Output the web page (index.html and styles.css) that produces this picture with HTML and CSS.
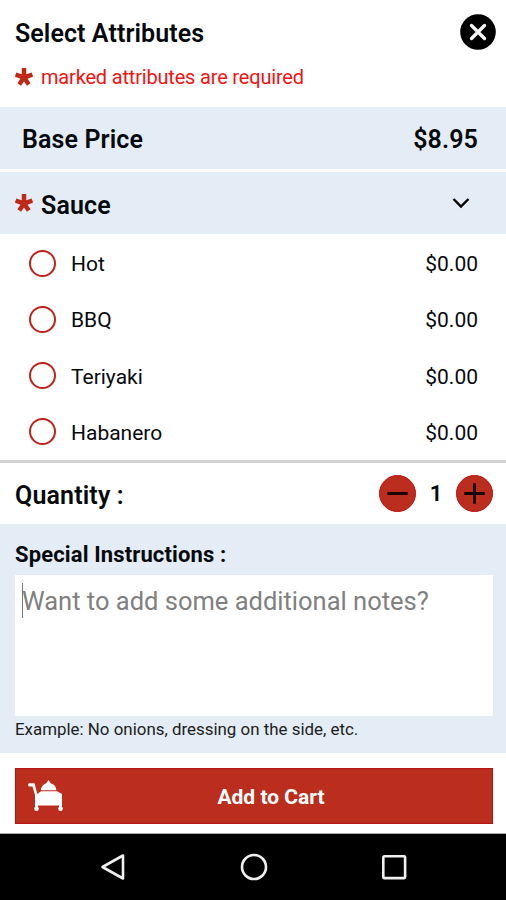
FILE: index.html
```html
<!DOCTYPE html>
<html lang="en">
<head>
<meta charset="utf-8">
<title>Select Attributes</title>
<link rel="stylesheet" href="styles.css">
</head>
<body>
<svg class="defs" aria-hidden="true">
  <symbol id="star" viewBox="0 0 18 18"><path d="M9 9.500V0M9 9.500L.6 6.600M9 9.500L17.4 6.600M9 9.500L4.200 16.600M9 9.500L13.800 16.600" fill="none" stroke="currentColor" stroke-width="4.5"/></symbol>
</svg>
<main class="screen">
  <header class="header">
    <div class="title-row">
      <h1 class="title">Select Attributes</h1>
      <button class="close" aria-label="Close"><svg viewBox="0 0 36 36"><circle cx="18" cy="18" r="17.8" fill="#000"/><path d="M11.5 11.5l13 13m0-13l-13 13" stroke="#f4f4f4" stroke-width="3.4" stroke-linecap="round"/></svg></button>
    </div>
    <p class="required"><svg class="star"><use href="#star"/></svg><span class="required-text">marked attributes are required</span></p>
  </header>
  <section class="band base"><span class="base-label">Base Price</span><span class="base-value">$8.95</span></section>
  <section class="band sauce">
    <svg class="star"><use href="#star"/></svg><span class="sauce-label">Sauce</span>
    <svg class="chevron" viewBox="0 0 18 12"><path d="M1.5 2L9 9.5L16.5 2" fill="none" stroke="#000" stroke-width="2.4"/></svg>
  </section>
  <ul class="options">
    <li class="option"><i class="radio"></i><span class="name">Hot</span><span class="cost">$0.00</span></li>
    <li class="option"><i class="radio"></i><span class="name">BBQ</span><span class="cost">$0.00</span></li>
    <li class="option"><i class="radio"></i><span class="name">Teriyaki</span><span class="cost">$0.00</span></li>
    <li class="option"><i class="radio"></i><span class="name">Habanero</span><span class="cost">$0.00</span></li>
  </ul>
  <section class="quantity">
    <span class="quantity-label">Quantity :</span>
    <button class="step" aria-label="Decrease"><svg viewBox="0 0 36 36"><path d="M7.5 18h21" stroke="#160503" stroke-width="3"/></svg></button>
    <span class="count">1</span>
    <button class="step" aria-label="Increase"><svg viewBox="0 0 36 36"><path d="M7.5 18h21M18 7.5v21" stroke="#160503" stroke-width="3"/></svg></button>
  </section>
  <section class="notes">
    <h2 class="notes-title">Special Instructions :</h2>
    <div class="notes-box"><i class="caret"></i><span class="placeholder">Want to add some additional notes?</span></div>
    <p class="example">Example: No onions, dressing on the side, etc.</p>
  </section>
  <section class="actions">
    <button class="add">
      <svg class="cart" viewBox="0 0 36 32"><g fill="#fff"><path d="M-.8 4.500Q-.8 3.300.5 3.300H5.500L8.300 14L12 11.300H28L33 14V25.500H6V15L3.500 6.500H.3Q-.8 6.500-.8 5.500z"/><path d="M12 10.300C12 6.500 14.500 4.500 17.300 3.300L19.500 0 21.700 3.300C25 4.500 27.300 6.500 27.300 10.300z"/><path d="M6 25h3v4H6zM30 25h3v4h-3z"/><circle cx="7.500" cy="28.800" r="2.300"/><circle cx="31.500" cy="28.800" r="2.300"/></g></svg>
      <span class="add-label">Add to Cart</span>
    </button>
  </section>
  <nav class="navbar">
    <svg class="nav-icon" viewBox="0 0 28 28"><path d="M3.500 14L24 2.500V25.500z"/></svg>
    <svg class="nav-icon" viewBox="0 0 28 28"><circle cx="14" cy="14" r="12"/></svg>
    <svg class="nav-icon" viewBox="0 0 28 28"><rect x="3.300" y="3.300" width="21.800" height="21.800" rx="1"/></svg>
  </nav>
</main>
</body>
</html>
```
FILE: styles.css
```css
* { box-sizing: border-box; }
body { margin: 0; background: #fff; color: #070a0d; font-family: Roboto, "Liberation Sans", sans-serif; }
h1, h2, p, ul { margin: 0; padding: 0; }
button { border: 0; padding: 0; font-family: inherit; }
svg { display: block; flex: none; overflow: visible; }
.defs { display: none; }
.screen { width: 506px; height: 900px; display: flex; flex-direction: column; overflow: hidden; }
.screen > * { flex: none; }
.header { height: 107px; padding: 13px 10px 0 15px; }
.title-row { display: flex; justify-content: space-between; align-items: center; height: 37px; }
.title { font-size: 25px; font-weight: 600; line-height: 37px; padding-top: 3px; letter-spacing: .08px; }
.close { width: 36px; height: 36px; background: none; }
.required { display: flex; align-items: center; height: 28px; margin-top: 13px; padding-bottom: 1px; }
.star { width: 18px; height: 18px; color: #bf2a18; margin-right: 8px; }
.required-text { color: #f51212; font-size: 20px; letter-spacing: -.18px; padding-top: 1px; }
.band { display: flex; align-items: center; background: #e4ecf5; height: 62px; font-size: 25px; font-weight: 600; letter-spacing: .12px; }
.base { padding: 3px 28px 0 22px; justify-content: space-between; margin-bottom: 3px; }
.sauce { padding: 5px 36px 0 15px; }
.sauce .star { margin-bottom: 5px; }
.chevron { width: 18px; height: 12px; margin-left: auto; margin-bottom: 6px; }
.options { list-style: none; height: 229px; padding-top: 1px; border-bottom: 3px solid #d3d3d3; }
.option { display: flex; align-items: center; height: 56.250px; padding: 0 28px 0 29px; font-size: 21px; }
.radio { width: 27px; height: 27px; border: 2.500px solid #bd2118; border-radius: 50%; margin-right: 15px; }
.name, .cost { padding-top: 2px; }
.cost { margin-left: auto; }
.quantity { display: flex; align-items: center; height: 61px; padding: 0 13px 0 15px; }
.quantity-label { font-size: 25px; font-weight: 600; margin-right: auto; padding-top: 3px; letter-spacing: .15px; }
.step { width: 37px; height: 37px; border-radius: 50%; background: #bb2d1c; border: 1px solid #c20c10; }
.count { width: 40px; text-align: center; font-size: 22px; font-weight: 600; }
.notes { height: 229px; background: #e4ecf5; padding: 17px 13px 0 15px; }
.notes-title { font-size: 22px; line-height: 28px; font-weight: 700; letter-spacing: .13px; }
.notes-box { display: flex; align-items: flex-start; height: 141px; margin-top: 6px; background: #fff; padding: 8px 0 0 7px; }
.caret { width: 1px; height: 35px; background: #777; margin-right: -1px; }
.placeholder { font-size: 25.500px; line-height: 36px; color: #808080; white-space: nowrap; }
.example { font-size: 16.900px; line-height: 26px; color: #1b1d20; }
.actions { height: 81px; padding: 15px 13px 0 15px; border-bottom: 1px solid #aaa; }
.add { display: grid; grid-template-columns: 60px 1fr 60px; align-items: center; width: 100%; height: 56px; background: #bb2d1c; border: 1px solid #b81414; color: #fff; }
.cart { width: 36px; height: 32px; margin-left: 13px; }
.add-label { grid-column: 2; font-size: 21px; font-weight: 700; padding-top: 2px; text-align: center; margin-left: 34px; }
.navbar { display: flex; height: 66px; background: #000; padding: 19px 98px 0 99px; justify-content: space-between; }
.nav-icon { width: 28px; height: 28px; fill: none; stroke: #f0f0f0; stroke-width: 2.600; stroke-linejoin: round; }
```
